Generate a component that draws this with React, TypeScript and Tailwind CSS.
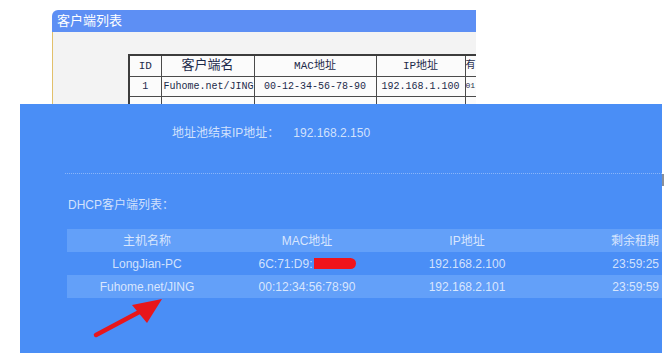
import React from 'react'

const cjk = { fontFamily: '"Liberation Sans", "Noto Sans CJK SC", sans-serif' }
const mono = { fontFamily: '"Liberation Mono", "Noto Sans CJK SC", monospace' }

const clients = [
  { name: 'LongJian-PC', mac: '6C:71:D9:', ip: '192.168.2.100', lease: '23:59:25', masked: true },
  { name: 'Fuhome.net/JING', mac: '00:12:34:56:78:90', ip: '192.168.2.101', lease: '23:59:59', masked: false },
]

function OldClientTable() {
  const cell = 'border border-[#4a4a4a] h-[20px] px-[2px] text-center whitespace-nowrap overflow-hidden'
  const edge = 'border-y border-l border-[#4a4a4a] h-[20px] p-0 text-left whitespace-nowrap'
  return (
    <table className="w-[347px] border-collapse border-y-2 border-l-2 border-[#3c3c3c] bg-[#fbfbfb] text-[#1c2a4a] table-fixed" style={mono}>
      <colgroup>
        <col className="w-[32px]" />
        <col className="w-[93px]" />
        <col className="w-[122px]" />
        <col className="w-[89px]" />
        <col className="w-[11px]" />
      </colgroup>
      <thead>
        <tr className="text-[11px]">
          <td className={cell}>ID</td>
          <td className={`${cell} text-[13px]`}>客户端名</td>
          <td className={cell}>MAC地址</td>
          <td className={cell}>IP地址</td>
          <td className={`${edge} text-[10px]`}>有</td>
        </tr>
      </thead>
      <tbody>
        <tr className="text-[10px]">
          <td className={cell}>1</td>
          <td className={`${cell} text-left`}>Fuhome.net/JING</td>
          <td className={cell}>00-12-34-56-78-90</td>
          <td className={cell}>192.168.1.100</td>
          <td className={`${edge} text-[8px]`}>01</td>
        </tr>
        <tr>
          <td className={cell}></td>
          <td className={cell}></td>
          <td className={cell}></td>
          <td className={cell}></td>
          <td className={edge}></td>
        </tr>
      </tbody>
    </table>
  )
}

function Arrow() {
  return (
    <svg className="absolute left-0 top-0" width="669" height="358" viewBox="0 0 669 358">
      <line x1="96" y1="335" x2="143" y2="310" stroke="#e8161b" strokeWidth="4.5" strokeLinecap="round" />
      <polygon points="162,299 132,305 147,323" fill="#e8161b" />
    </svg>
  )
}

export default function App() {
  return (
    <div className="relative w-[669px] h-[358px] bg-white overflow-hidden" style={cjk}>
      {/* old router page */}
      <div className="ml-[52px] pt-[10px] w-[424px]">
        <div className="h-[22px] bg-[#5d8ff4] rounded-tl-[6px] text-white text-[13px] leading-[22px] pl-[5px]">客户端列表</div>
        <div className="h-[72px] bg-[#f3f3f3] border-l border-[#e2c06a] pt-[22px] pl-[75px] overflow-hidden">
          <OldClientTable />
        </div>
      </div>

      {/* new router page */}
      <div className="relative ml-[20px] w-[642px] h-[249px] bg-[#4a8ef6] overflow-hidden">
        <div className="flex pt-[21px] pl-[152px] text-[12px] leading-[16px] text-white/75">
          <span>地址池结束IP地址：</span>
          <span className="ml-[14px]">192.168.2.150</span>
        </div>
        <div className="ml-[45px] mt-[32px] border-t border-dotted border-white/35"></div>
        <div className="pl-[48px] mt-[23px] text-[12px] leading-[16px] text-white/75">DHCP客户端列表：</div>
        <div className="ml-[47px] mt-[16px] w-[595px] text-[12px] text-white/75">
          <div className="grid grid-cols-[160px_160px_160px_1fr] h-[23px] items-center bg-[#63a0f9] text-center">
            <span>主机名称</span>
            <span>MAC地址</span>
            <span>IP地址</span>
            <span className="text-right pr-[3px]">剩余租期</span>
          </div>
          {clients.map((c, i) => (
            <div key={c.name} className={`grid grid-cols-[160px_160px_160px_1fr] h-[23px] items-center text-center ${i % 2 ? 'bg-[#63a0f9]' : ''}`}>
              <span>{c.name}</span>
              <span className="flex justify-center items-center">
                {c.mac}
                {c.masked && <span className="inline-block w-[42px] h-[11px] bg-[#f0141c] rounded-r-[6px] ml-[1px]"></span>}
              </span>
              <span>{c.ip}</span>
              <span className="text-right pr-[3px]">{c.lease}</span>
            </div>
          ))}
        </div>
      </div>
      <div className="absolute left-[662px] top-[174px] w-[2px] h-[12px] bg-[#8a8f99]"></div>
      <Arrow />
    </div>
  )
}
